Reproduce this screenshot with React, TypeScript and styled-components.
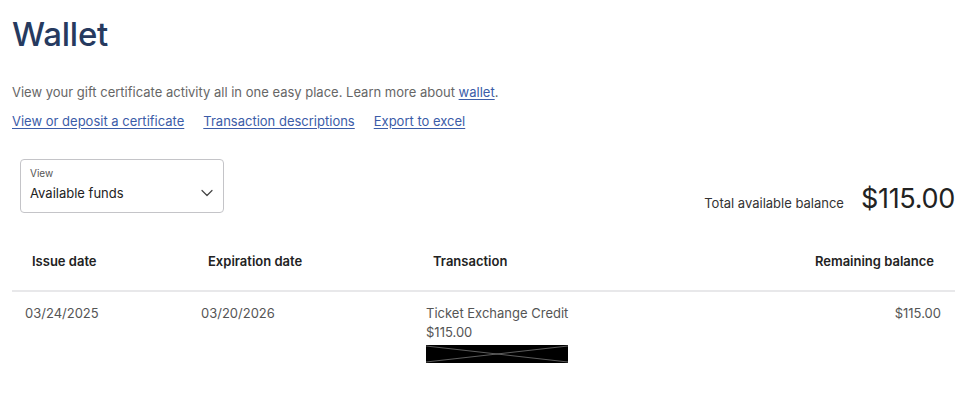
import React from "react";
import styled, { createGlobalStyle } from "styled-components";

const GlobalStyle = createGlobalStyle`
  html, body {
    margin: 0;
    padding: 0;
    background: #ffffff;
    font-family: Inter, "Noto Sans", sans-serif;
  }
`;

const rows = [
  {
    issued: "03/24/2025",
    expires: "03/20/2026",
    title: "Ticket Exchange Credit",
    amount: "$115.00",
    balance: "$115.00",
  },
];

const Redacted = () => (
  <RedactBox viewBox="0 0 142 18" preserveAspectRatio="none">
    <rect width="142" height="18" fill="#000" />
    <line x1="0" y1="1" x2="142" y2="17" stroke="#9a9a9a" strokeWidth="0.6" />
    <line x1="0" y1="17" x2="142" y2="1" stroke="#9a9a9a" strokeWidth="0.6" />
  </RedactBox>
);

const Chevron = () => (
  <svg width="12" height="8" viewBox="0 0 12 8" fill="none">
    <path d="M1 1.5l5 5 5-5" stroke="#444" strokeWidth="1.2" strokeLinecap="round" strokeLinejoin="round" />
  </svg>
);

const App = () => {
  return (
    <Page>
      <GlobalStyle />
      <Title>Wallet</Title>
      <Intro>
        View your gift certificate activity all in one easy place. Learn more about{" "}
        <InlineLink href="#">wallet</InlineLink>.
      </Intro>
      <LinkRow>
        <ActionLink href="#">View or deposit a certificate</ActionLink>
        <ActionLink href="#">Transaction descriptions</ActionLink>
        <ActionLink href="#">Export to excel</ActionLink>
      </LinkRow>

      <Toolbar>
        <Select>
          <SelectLabel>View</SelectLabel>
          <SelectValue>
            Available funds
            <Chevron />
          </SelectValue>
        </Select>
        <Total>
          <TotalLabel>Total available balance</TotalLabel>
          <TotalAmount>$115.00</TotalAmount>
        </Total>
      </Toolbar>

      <Table>
        <HeadRow>
          <HeadCell>Issue date</HeadCell>
          <HeadCell>Expiration date</HeadCell>
          <HeadCell>Transaction</HeadCell>
          <HeadCell $right>Remaining balance</HeadCell>
        </HeadRow>
        {rows.map((r) => (
          <BodyRow key={r.issued}>
            <Cell>{r.issued}</Cell>
            <Cell>{r.expires}</Cell>
            <Cell>
              <div>{r.title}</div>
              <div>{r.amount}</div>
              <Redacted />
            </Cell>
            <Cell $right>{r.balance}</Cell>
          </BodyRow>
        ))}
      </Table>
    </Page>
  );
};

export default App;

const Page = styled.div`
  padding: 14px 17px 0 12px;
  color: #555;
`;

const Title = styled.h1`
  margin: 0;
  font-size: 33px;
  font-weight: 500;
  color: #263a5f;
  letter-spacing: -0.2px;
  line-height: 40px;
`;

const Intro = styled.p`
  margin: 29px 0 0;
  font-size: 13px;
  line-height: 18px;
  color: #666;
`;

const InlineLink = styled.a`
  color: #3b5ca8;
  text-decoration: underline;
  text-underline-offset: 2px;
`;

const LinkRow = styled.div`
  display: flex;
  gap: 19px;
  margin-top: 11px;
`;

const ActionLink = styled.a`
  color: #3b5ca8;
  font-size: 13px;
  line-height: 18px;
  text-decoration: underline;
  text-underline-offset: 2px;
`;

const Toolbar = styled.div`
  display: flex;
  align-items: flex-end;
  justify-content: space-between;
  margin-top: 29px;
  padding-left: 8px;
`;

const Select = styled.div`
  width: 204px;
  height: 54px;
  box-sizing: border-box;
  border: 1px solid #c4c4c8;
  border-radius: 4px;
  padding: 7px 10px 0 9px;
`;

const SelectLabel = styled.div`
  font-size: 10px;
  line-height: 13px;
  color: #555;
`;

const SelectValue = styled.div`
  display: flex;
  align-items: center;
  justify-content: space-between;
  margin-top: 5px;
  font-size: 13px;
  color: #222;
`;

const Total = styled.div`
  display: flex;
  align-items: baseline;
  gap: 17px;
  margin-bottom: -2px;
`;

const TotalLabel = styled.span`
  font-size: 13px;
  color: #333;
`;

const TotalAmount = styled.span`
  font-size: 27px;
  line-height: 33px;
  color: #222;
  letter-spacing: -0.3px;
`;

const Table = styled.div`
  margin-top: 19px;
`;

const HeadRow = styled.div`
  display: grid;
  grid-template-columns: 176px 225px 1fr 220px;
  height: 58px;
  align-items: center;
  border-bottom: 2px solid #e8e8ea;
  padding: 0 21px 0 20px;
`;

const HeadCell = styled.div<{ $right?: boolean }>`
  font-size: 13px;
  font-weight: 600;
  color: #222;
  text-align: ${(p) => (p.$right ? "right" : "left")};
`;

const BodyRow = styled.div`
  display: grid;
  grid-template-columns: 176px 225px 1fr 220px;
  padding: 12px 14px 0 13px;
`;

const Cell = styled.div<{ $right?: boolean }>`
  font-size: 13px;
  line-height: 19px;
  color: #555;
  text-align: ${(p) => (p.$right ? "right" : "left")};
`;

const RedactBox = styled.svg`
  display: block;
  width: 142px;
  height: 18px;
  margin-top: 3px;
`;
